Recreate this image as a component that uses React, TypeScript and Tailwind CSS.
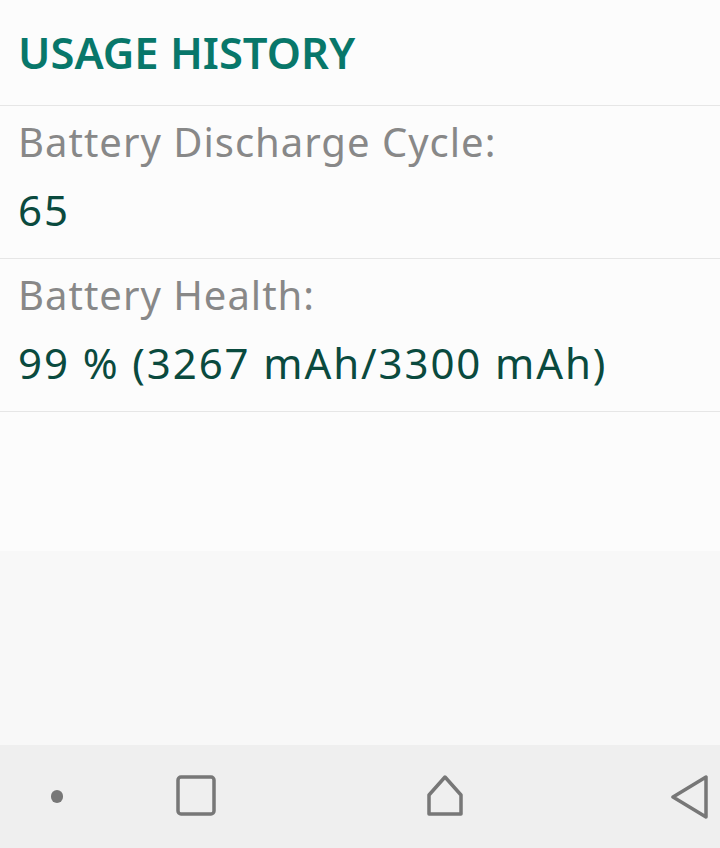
import React from "react";

type Stat = { label: string; value: string };

const stats: Stat[] = [
  { label: "Battery Discharge Cycle:", value: "65" },
  { label: "Battery Health:", value: "99 % (3267 mAh/3300 mAh)" },
];

function StatRow({ stat }: { stat: Stat }) {
  return (
    <div className="border-b border-[#e6e6e6] px-[18px] pt-[2px] pb-[14px]">
      <p className="text-[40px] leading-[68px] tracking-[1px] text-[#888888]">{stat.label}</p>
      <p className="text-[42px] leading-[68px] tracking-[1.9px] text-[#0a4a3e]">{stat.value}</p>
    </div>
  );
}

function NavBar() {
  return (
    <div className="flex h-[103px] items-center bg-[#efefef] text-[#777777]">
      <div className="flex w-[114px] justify-center">
        <span className="h-[13px] w-[12px] rounded-full bg-[#777777]" />
      </div>
      <div className="flex w-[165px] justify-center">
        <svg width="44" height="44" viewBox="0 0 44 44" fill="none" stroke="currentColor" strokeWidth="3.5">
          <rect x="3" y="2" width="36" height="37" rx="3" />
        </svg>
      </div>
      <div className="flex flex-1 justify-center">
        <svg width="44" height="44" viewBox="0 0 44 44" fill="none" stroke="currentColor" strokeWidth="3.5" strokeLinejoin="round">
          <path d="M22 2 L38 20 L38 39 L6 39 L6 20 Z" />
        </svg>
      </div>
      <div className="flex w-[110px] justify-end pr-[9px]">
        <svg width="44" height="44" viewBox="0 0 44 44" fill="none" stroke="currentColor" strokeWidth="3.5" strokeLinejoin="round">
          <path d="M39 2 L39 42 L6 22 Z" />
        </svg>
      </div>
    </div>
  );
}

export default function App() {
  return (
    <div
      className="flex h-[848px] w-[720px] flex-col bg-[#fcfcfc]"
      style={{ fontFamily: '"Noto Sans", "Open Sans", sans-serif' }}
    >
      <div className="flex h-[106px] items-center border-b border-[#e6e6e6] px-[18px]">
        <h1 className="text-[43.5px] font-semibold leading-none text-[#08776a]">USAGE HISTORY</h1>
      </div>
      {stats.map((stat) => (
        <StatRow key={stat.label} stat={stat} />
      ))}
      <div className="h-[139px]" />
      <div className="flex-1 bg-[#f8f8f8]" />
      <NavBar />
    </div>
  );
}
